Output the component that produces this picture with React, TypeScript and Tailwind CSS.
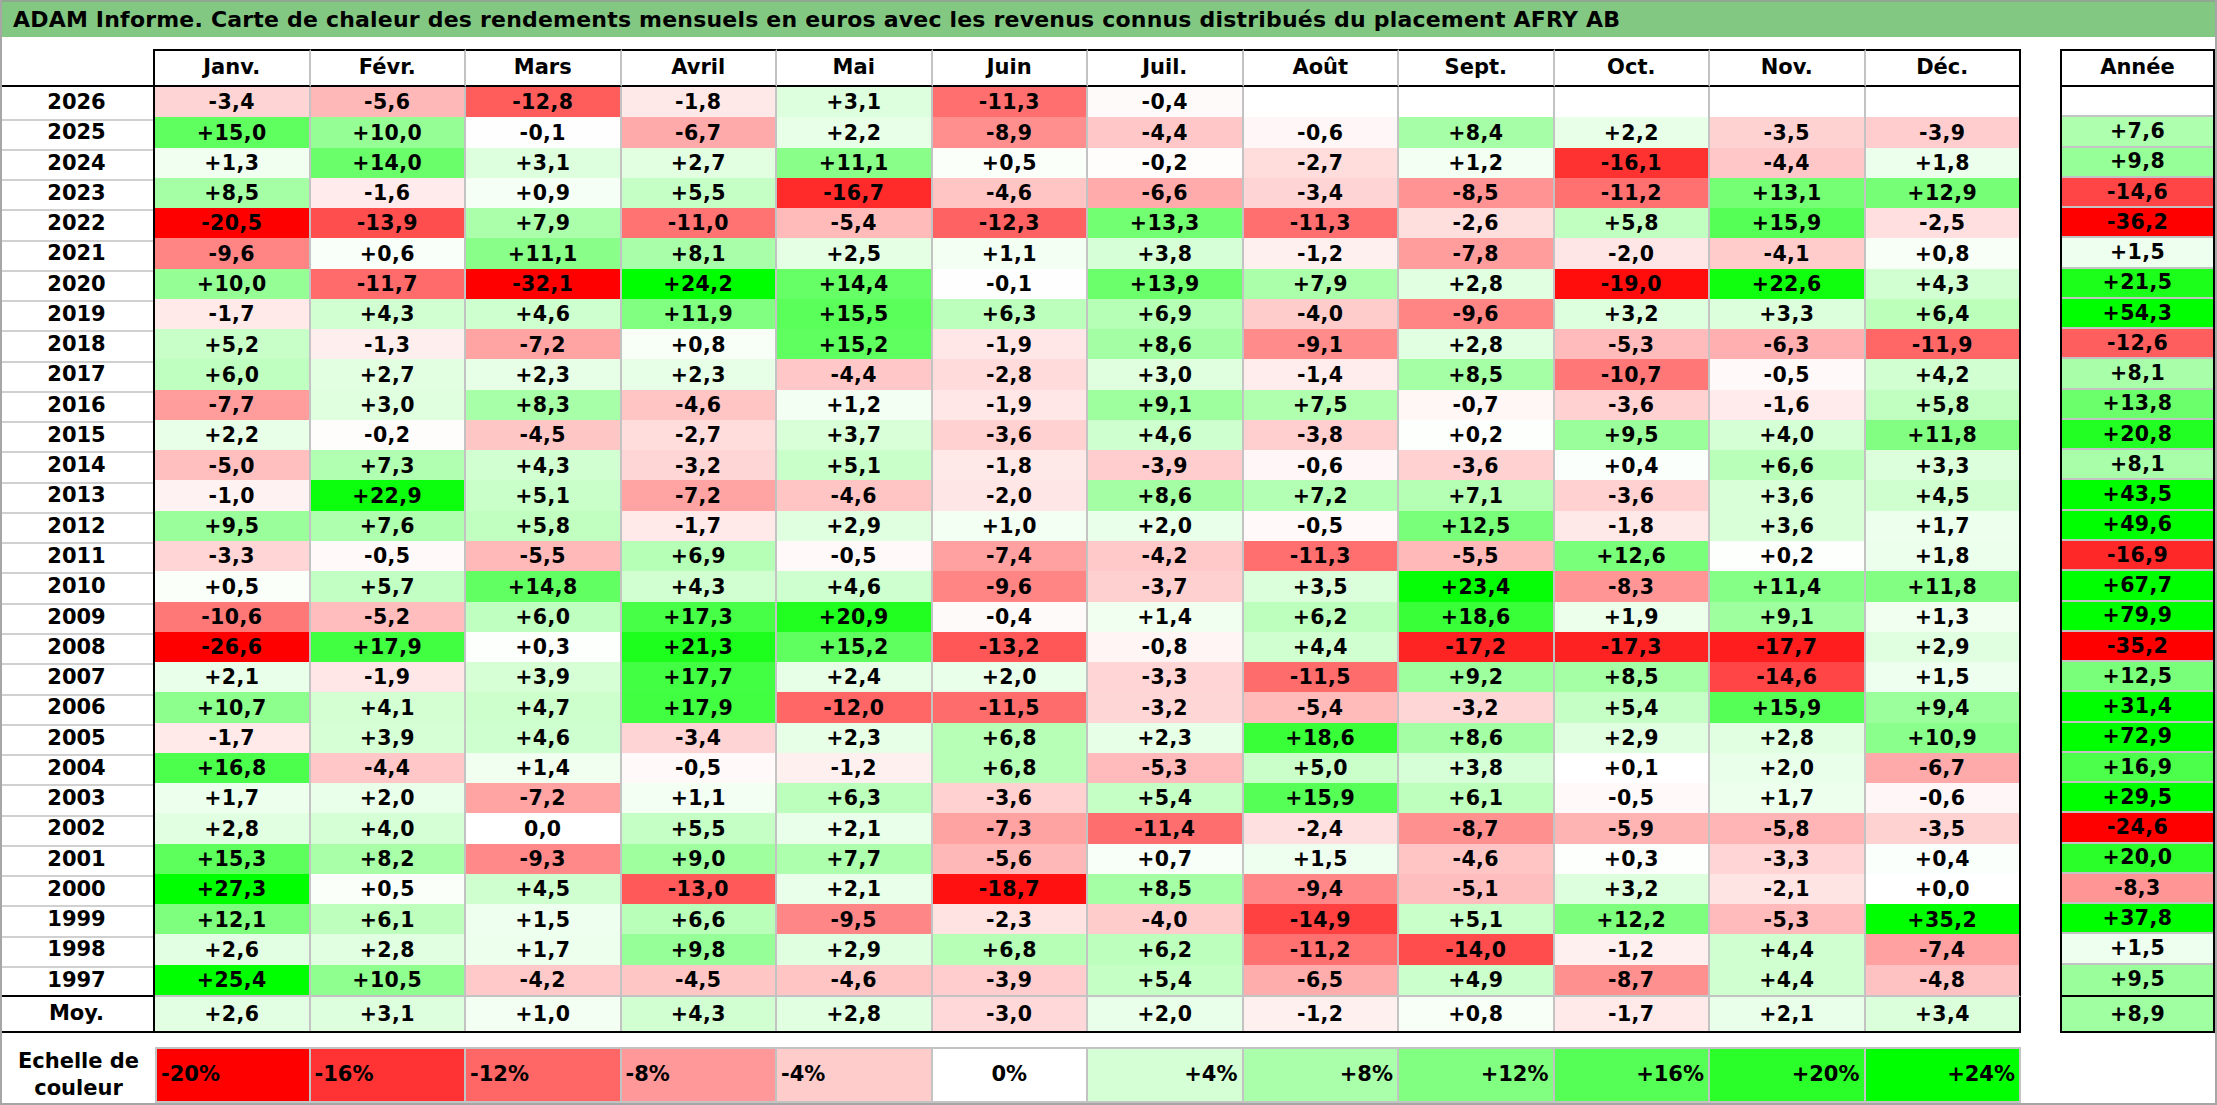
const MONTHS = ['Janv.', 'Févr.', 'Mars', 'Avril', 'Mai', 'Juin', 'Juil.', 'Août', 'Sept.', 'Oct.', 'Nov.', 'Déc.'];

// year | 12 months | year total
const DATA: string[] = [
  '2026|-3,4 -5,6 -12,8 -1,8 +3,1 -11,3 -0,4 _ _ _ _ _|_',
  '2025|+15,0 +10,0 -0,1 -6,7 +2,2 -8,9 -4,4 -0,6 +8,4 +2,2 -3,5 -3,9|+7,6',
  '2024|+1,3 +14,0 +3,1 +2,7 +11,1 +0,5 -0,2 -2,7 +1,2 -16,1 -4,4 +1,8|+9,8',
  '2023|+8,5 -1,6 +0,9 +5,5 -16,7 -4,6 -6,6 -3,4 -8,5 -11,2 +13,1 +12,9|-14,6',
  '2022|-20,5 -13,9 +7,9 -11,0 -5,4 -12,3 +13,3 -11,3 -2,6 +5,8 +15,9 -2,5|-36,2',
  '2021|-9,6 +0,6 +11,1 +8,1 +2,5 +1,1 +3,8 -1,2 -7,8 -2,0 -4,1 +0,8|+1,5',
  '2020|+10,0 -11,7 -32,1 +24,2 +14,4 -0,1 +13,9 +7,9 +2,8 -19,0 +22,6 +4,3|+21,5',
  '2019|-1,7 +4,3 +4,6 +11,9 +15,5 +6,3 +6,9 -4,0 -9,6 +3,2 +3,3 +6,4|+54,3',
  '2018|+5,2 -1,3 -7,2 +0,8 +15,2 -1,9 +8,6 -9,1 +2,8 -5,3 -6,3 -11,9|-12,6',
  '2017|+6,0 +2,7 +2,3 +2,3 -4,4 -2,8 +3,0 -1,4 +8,5 -10,7 -0,5 +4,2|+8,1',
  '2016|-7,7 +3,0 +8,3 -4,6 +1,2 -1,9 +9,1 +7,5 -0,7 -3,6 -1,6 +5,8|+13,8',
  '2015|+2,2 -0,2 -4,5 -2,7 +3,7 -3,6 +4,6 -3,8 +0,2 +9,5 +4,0 +11,8|+20,8',
  '2014|-5,0 +7,3 +4,3 -3,2 +5,1 -1,8 -3,9 -0,6 -3,6 +0,4 +6,6 +3,3|+8,1',
  '2013|-1,0 +22,9 +5,1 -7,2 -4,6 -2,0 +8,6 +7,2 +7,1 -3,6 +3,6 +4,5|+43,5',
  '2012|+9,5 +7,6 +5,8 -1,7 +2,9 +1,0 +2,0 -0,5 +12,5 -1,8 +3,6 +1,7|+49,6',
  '2011|-3,3 -0,5 -5,5 +6,9 -0,5 -7,4 -4,2 -11,3 -5,5 +12,6 +0,2 +1,8|-16,9',
  '2010|+0,5 +5,7 +14,8 +4,3 +4,6 -9,6 -3,7 +3,5 +23,4 -8,3 +11,4 +11,8|+67,7',
  '2009|-10,6 -5,2 +6,0 +17,3 +20,9 -0,4 +1,4 +6,2 +18,6 +1,9 +9,1 +1,3|+79,9',
  '2008|-26,6 +17,9 +0,3 +21,3 +15,2 -13,2 -0,8 +4,4 -17,2 -17,3 -17,7 +2,9|-35,2',
  '2007|+2,1 -1,9 +3,9 +17,7 +2,4 +2,0 -3,3 -11,5 +9,2 +8,5 -14,6 +1,5|+12,5',
  '2006|+10,7 +4,1 +4,7 +17,9 -12,0 -11,5 -3,2 -5,4 -3,2 +5,4 +15,9 +9,4|+31,4',
  '2005|-1,7 +3,9 +4,6 -3,4 +2,3 +6,8 +2,3 +18,6 +8,6 +2,9 +2,8 +10,9|+72,9',
  '2004|+16,8 -4,4 +1,4 -0,5 -1,2 +6,8 -5,3 +5,0 +3,8 +0,1 +2,0 -6,7|+16,9',
  '2003|+1,7 +2,0 -7,2 +1,1 +6,3 -3,6 +5,4 +15,9 +6,1 -0,5 +1,7 -0,6|+29,5',
  '2002|+2,8 +4,0 0,0 +5,5 +2,1 -7,3 -11,4 -2,4 -8,7 -5,9 -5,8 -3,5|-24,6',
  '2001|+15,3 +8,2 -9,3 +9,0 +7,7 -5,6 +0,7 +1,5 -4,6 +0,3 -3,3 +0,4|+20,0',
  '2000|+27,3 +0,5 +4,5 -13,0 +2,1 -18,7 +8,5 -9,4 -5,1 +3,2 -2,1 +0,0|-8,3',
  '1999|+12,1 +6,1 +1,5 +6,6 -9,5 -2,3 -4,0 -14,9 +5,1 +12,2 -5,3 +35,2|+37,8',
  '1998|+2,6 +2,8 +1,7 +9,8 +2,9 +6,8 +6,2 -11,2 -14,0 -1,2 +4,4 -7,4|+1,5',
  '1997|+25,4 +10,5 -4,2 -4,5 -4,6 -3,9 +5,4 -6,5 +4,9 -8,7 +4,4 -4,8|+9,5',
];
const AVG = 'Moy.|+2,6 +3,1 +1,0 +4,3 +2,8 -3,0 +2,0 -1,2 +0,8 -1,7 +2,1 +3,4|+8,9';

const SCALE = [-20, -16, -12, -8, -4, 0, 4, 8, 12, 16, 20, 24];

function parse(line: string) {
  const [label, months, total] = line.split('|');
  const clean = (s: string) => (s === '_' ? '' : s);
  return { label, values: months.split(' ').map(clean), total: clean(total) };
}

// red saturates at -20, green at +24 (same as the legend)
function heat(text: string) {
  if (!text) return '#ffffff';
  const v = parseFloat(text.replace(',', '.'));
  if (v < 0) {
    const c = Math.round(255 * (1 - Math.min(1, -v / 20)));
    return `rgb(255,${c},${c})`;
  }
  const c = Math.round(255 * (1 - Math.min(1, v / 24)));
  return `rgb(${c},255,${c})`;
}

const grid = 'grid grid-cols-[155px_repeat(12,155.5px)]';
const num = 'text-[20.5px] font-bold tracking-[0.4px]';

function Cell({ text, last }: { text: string; last?: boolean }) {
  return (
    <div
      className={`flex items-center justify-center border-b-2 border-[#c3c3c3] ${last ? 'border-r-2 border-r-black' : 'border-r-2'}`}
      style={{ backgroundColor: heat(text) }}
    >
      {text}
    </div>
  );
}

export default function App() {
  const rows = DATA.map(parse);
  const avg = parse(AVG);

  return (
    <div className="w-[2217px] h-[1105px] bg-white border-2 border-t-0 border-[#a6a6a6] font-['DejaVu_Sans',sans-serif] text-black overflow-hidden">
      <div className="h-[37px] bg-[#82c882] border-t-2 border-[#8fa88f] flex items-center pl-[11px] text-[22px] font-bold tracking-[0.2px]">
        ADAM Informe. Carte de chaleur des rendements mensuels en euros avec les revenus connus distribués du placement AFRY AB
      </div>

      <div className="flex pt-[12px]">
        <div className="w-[2021px] -ml-[2px]">
          <div className={`${grid} h-[38px] text-[21px] font-bold`}>
            <div className="border-r-2 border-b-2 border-black" />
            {MONTHS.map((m, i) => (
              <div
                key={m}
                className={`flex items-center justify-center border-t-2 border-b-2 border-t-black border-b-black ${i === 11 ? 'border-r-2 border-r-black' : 'border-r-2 border-r-[#c3c3c3]'}`}
              >
                {m}
              </div>
            ))}
          </div>

          {rows.map((r, ri) => (
            <div key={r.label} className={`${grid} h-[30.27px] ${num}`}>
              <div className={`flex items-center justify-center border-r-2 border-r-black text-[21px] tracking-normal ${ri < rows.length - 1 ? 'border-b-2 border-b-[#d0d0d0]' : ''}`}>
                {r.label}
              </div>
              {r.values.map((v, i) => (
                <Cell key={i} text={v} last={i === 11} />
              ))}
            </div>
          ))}

          <div className={`${grid} h-[38px] ${num} border-t-2 border-b-2 border-black`}>
            <div className="flex items-center justify-center border-r-2 border-black text-[21px] tracking-normal">{avg.label}</div>
            {avg.values.map((v, i) => (
              <div
                key={i}
                className={`flex items-center justify-center ${i === 11 ? 'border-r-2 border-black' : 'border-r-2 border-[#c3c3c3]'}`}
                style={{ backgroundColor: heat(v) }}
              >
                {v}
              </div>
            ))}
          </div>

          <div className={`${grid} h-[56px] mt-[14px] text-[21px] font-bold`}>
            <div className="flex flex-col items-center justify-center leading-[27px] pl-[2px]">
              <span>Echelle de</span>
              <span>couleur</span>
            </div>
            {SCALE.map((s, i) => {
              const label = s === 0 ? '0%' : s > 0 ? `+${s}%` : `${s}%`;
              const align = s < 0 ? 'justify-start pl-[4px]' : s === 0 ? 'justify-center' : 'justify-end pr-[4px]';
              return (
                <div
                  key={s}
                  className={`flex items-center ${align} border-t-2 border-b-2 border-r-2 border-[#c3c3c3] ${i === 0 ? 'border-l-2' : ''}`}
                  style={{ backgroundColor: heat(String(s)) }}
                >
                  {label}
                </div>
              );
            })}
          </div>
        </div>

        <div className="ml-[39px] w-[155px]">
          <div className="h-[38px] border-2 border-black flex items-center justify-center text-[21px] font-bold">Année</div>
          <div className="border-x-2 border-black">
            {rows.map((r, ri) => (
              <div
                key={r.label}
                className={`h-[30.27px] flex items-center justify-center ${num} ${ri < rows.length - 1 ? 'border-b-2 border-[#c3c3c3]' : ''}`}
                style={{ backgroundColor: heat(r.total) }}
              >
                {r.total}
              </div>
            ))}
          </div>
          <div
            className={`h-[38px] border-2 border-black flex items-center justify-center ${num}`}
            style={{ backgroundColor: heat(avg.total) }}
          >
            {avg.total}
          </div>
        </div>
      </div>
    </div>
  );
}
